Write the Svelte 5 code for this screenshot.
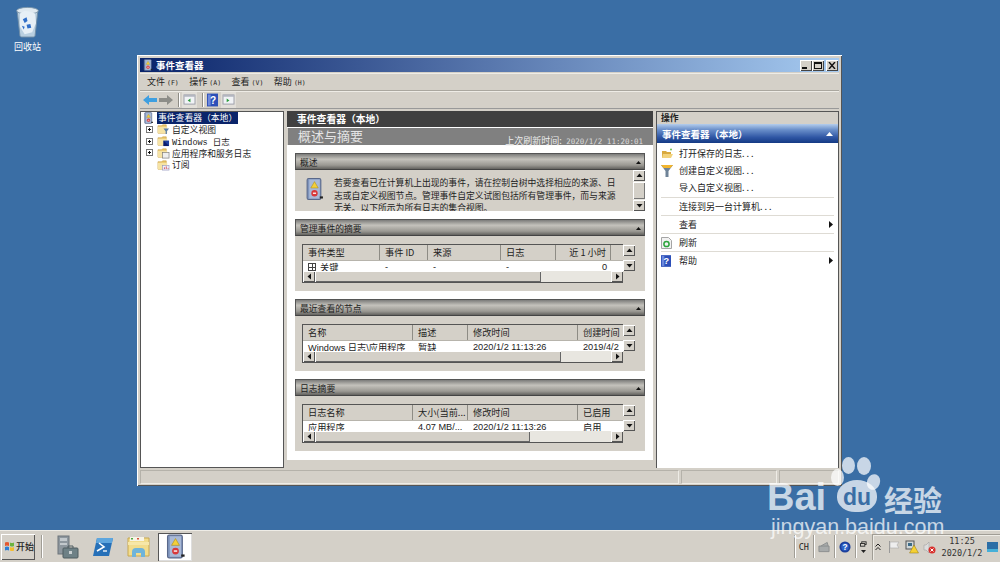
<script lang="ts">
	const tree = [
		{ label: '自定义视图', kind: 'filter', plus: true },
		{ label: 'Windows 日志', kind: 'win', plus: true },
		{ label: '应用程序和服务日志', kind: 'app', plus: true },
		{ label: '订阅', kind: 'sub', plus: false }
	];

	const tables = [
		{
			title: '管理事件的摘要',
			cols: [
				{ w: 77, text: '事件类型', row: '关键', expand: true },
				{ w: 48, text: '事件 ID', row: '-' },
				{ w: 73, text: '来源', row: '-' },
				{ w: 55, text: '日志', row: '-' },
				{ w: 55, text: '近 1 小时', row: '0', right: true },
				{ w: 12, text: '', row: '' }
			],
			thumb: 226
		},
		{
			title: '最近查看的节点',
			cols: [
				{ w: 110, text: '名称', row: 'Windows 日志\\应用程序' },
				{ w: 55, text: '描述', row: '暂缺' },
				{ w: 110, text: '修改时间', row: '2020/1/2 11:13:26' },
				{ w: 45, text: '创建时间', row: '2019/4/2' }
			],
			thumb: 246
		},
		{
			title: '日志摘要',
			cols: [
				{ w: 110, text: '日志名称', row: '应用程序' },
				{ w: 55, text: '大小(当前...', row: '4.07 MB/...' },
				{ w: 110, text: '修改时间', row: '2020/1/2 11:13:26' },
				{ w: 45, text: '已启用', row: '启用' }
			],
			thumb: 215
		}
	];

	const actions = [
		{ label: '打开保存的日志. . .', icon: 'open' },
		{ label: '创建自定义视图. . .', icon: 'funnel' },
		{ label: '导入自定义视图. . .', sep: true },
		{ label: '连接到另一台计算机. . .', sep: true },
		{ label: '查看', arrow: true, sep: true },
		{ label: '刷新', icon: 'refresh', sep: true },
		{ label: '帮助', icon: 'help', arrow: true }
	];
</script>

{#snippet logIcon(w, h)}
	<svg width={w} height={h} viewBox="0 0 18 22">
		<rect x="2" y="1" width="13" height="20" rx="1.5" fill="#7f95bd" stroke="#59688a" />
		<rect x="4" y="2" width="10" height="18" fill="#a9b9d6" />
		<path d="M9 4l3.500 6h-7z" fill="#f3cf3a" stroke="#a98a12" stroke-width=".5" />
		<circle cx="9" cy="15" r="3" fill="#d8383a" />
		<rect x="7.500" y="14.400" width="3" height="1.200" fill="#fff" />
		<path d="M14 18h3v2h-3z" fill="#222" />
	</svg>
{/snippet}

{#snippet folder(kind)}
	<svg width="13" height="12" viewBox="0 0 14 13">
		<path d="M1 3h4l1-1h4v9H1z" fill="#e8c468" stroke="#c69b3c" stroke-width=".6" />
		<rect x="1" y="4" width="10" height="7" fill="#f6e3a4" />
		{#if kind === 'filter'}
			<path d="M7 6h6l-2.300 3v3H9.300V9z" fill="#5c7fa8" />
		{:else if kind === 'win'}
			<rect x="7" y="6" width="6" height="6" fill="#1d3f9e" />
			<path d="M7 6l6 6H7z" fill="#0b1c6e" />
		{:else if kind === 'app'}
			<rect x="6" y="6" width="7" height="6" fill="#eee" stroke="#777" stroke-width=".7" />
		{:else}
			<rect x="6" y="7" width="7" height="5" fill="#eef" stroke="#8a8fb8" stroke-width=".6" />
			<path d="M8 11V9M10 11V8M12 11v-1" stroke="#c33" stroke-width=".8" />
		{/if}
	</svg>
{/snippet}

{#snippet scrollBtn(dir)}
	<span class="sbtn">
		<svg width="7" height="7" viewBox="0 0 7 7">
			{#if dir === 'up'}<path d="M3.500 1.500L6.500 5h-6z" />
			{:else if dir === 'down'}<path d="M3.500 5.500L.5 2h6z" />
			{:else if dir === 'left'}<path d="M1.500 3.500L5 .5v6z" />
			{:else}<path d="M5.500 3.500L2 .5v6z" />{/if}
		</svg>
	</span>
{/snippet}

{#snippet sectionHead(title)}
	<div class="sec-head">
		<span>{title}</span>
		<svg width="5" height="3" viewBox="0 0 5 3"><path d="M2.500 0L5 3H0z" fill="#111" /></svg>
	</div>
{/snippet}

<div class="desktop">
	<div class="wallpaper">
		<div class="recycle">
			<svg width="27" height="32" viewBox="0 0 28 34">
				<path d="M3 5h22l-3 27a2 2 0 0 1-2 1H8a2 2 0 0 1-2-1z" fill="#b9cfe0" stroke="#6f8da6" />
				<ellipse cx="14" cy="5" rx="11.500" ry="3.500" fill="#dfe9f0" stroke="#7e98ac" />
				<path d="M6 8l5-3 6 1 5 2 1 10-4 10-8 2-5-8z" fill="#e6eff6" />
				<path d="M9 14l4-2 1 4-3 2zM13 20l4-1 1 4-4 1zM8 21l3 1-1 3z" fill="#2f6ec8" />
			</svg>
			<span>回收站</span>
		</div>

		<div class="window">
			<div class="titlebar">
				{@render logIcon(10, 12)}
				<span class="title">事件查看器</span>
				<div class="win-btns">
					<span class="wbtn"><i class="min"></i></span>
					<span class="wbtn"><i class="max"></i></span>
					<span class="wbtn close">
						<svg width="8" height="7" viewBox="0 0 8 7"><path d="M1 0l6 7M7 0L1 7" stroke="#111" stroke-width="1.400" /></svg>
					</span>
				</div>
			</div>

			<div class="menubar">
				<span>文件 <em>(F)</em></span>
				<span>操作 <em>(A)</em></span>
				<span>查看 <em>(V)</em></span>
				<span>帮助 <em>(H)</em></span>
			</div>

			<div class="toolbar">
				<svg width="14" height="12" viewBox="0 0 14 12"><path d="M0 6l6-5v3h8v4H6v3z" fill="#3f9fe0" /></svg>
				<svg class="fwd" width="14" height="12" viewBox="0 0 14 12"><path d="M14 6L8 1v3H0v4h8v3z" fill="#8d8d88" /></svg>
				<i class="tsep"></i>
				<span class="tool">
					<svg width="13" height="11" viewBox="0 0 14 12">
						<rect x="1" y="1" width="12" height="10" fill="#f1f3f6" stroke="#9a9ca6" />
						<rect x="1" y="1" width="12" height="2" fill="#b3b6c0" />
						<path d="M8 5L5 7l3 2z" fill="#2c9c3c" />
					</svg>
				</span>
				<i class="tsep"></i>
				<span class="tool help">
					<svg width="11" height="14" viewBox="0 0 12 14"><rect width="12" height="14" fill="#2c4fb8" /><rect x="1" y="1" width="3" height="12" fill="#6c88dc" /><text x="6.500" y="11" class="q">?</text></svg>
				</span>
				<span class="tool">
					<svg width="13" height="11" viewBox="0 0 14 12">
						<rect x="1" y="1" width="12" height="10" fill="#f1f3f6" stroke="#9a9ca6" />
						<rect x="1" y="1" width="12" height="2" fill="#b3b6c0" />
						<path d="M5 5l3 2-3 2z" fill="#2c9c3c" />
					</svg>
				</span>
			</div>

			<div class="panes">
				<div class="tree">
					<div class="tree-row root">
						{@render logIcon(11, 12)}
						<span class="selected">事件查看器（本地）</span>
					</div>
					{#each tree as item}
						<div class="tree-row">
							{#if item.plus}<span class="plus"></span>{:else}<span class="noplus"></span>{/if}
							{@render folder(item.kind)}
							<span class:mono={item.kind === 'win'}>{item.label}</span>
						</div>
					{/each}
				</div>

				<div class="center">
					<div class="c-head">事件查看器（本地）</div>
					<div class="c-band">
						<span class="c-title">概述与摘要</span>
						<span class="c-time"><b>上次刷新时间:</b> 2020/1/2 11:20:01</span>
					</div>
					<div class="c-body">
						<section>
							{@render sectionHead('概述')}
							<div class="overview">
								{@render logIcon(19, 24)}
								<p>若要查看已在计算机上出现的事件，请在控制台树中选择相应的来源、日志或自定义视图节点。管理事件自定义试图包括所有管理事件，而与来源无关。以下所示为所有日志的集合视图。</p>
								<div class="vbar">
									{@render scrollBtn('up')}
									<span class="vthumb"></span>
									{@render scrollBtn('down')}
								</div>
							</div>
						</section>

						{#each tables as t}
							<section>
								{@render sectionHead(t.title)}
								<div class="sec-body">
									<div class="tbl">
										<div class="tbl-main">
											<div class="tbl-head">
												{#each t.cols as c}
													<span style="width:{c.w}px" class:right={c.right}>{c.text}</span>
												{/each}
											</div>
											<div class="tbl-row">
												{#each t.cols as c}
													<span style="width:{c.w}px" class:right={c.right}>
														{#if c.expand}<i class="expand"></i>{/if}{c.row}
													</span>
												{/each}
											</div>
											<div class="hbar">
												{@render scrollBtn('left')}
												<span class="hthumb" style="width:{t.thumb}px"></span>
												<span class="htrack"></span>
												{@render scrollBtn('right')}
											</div>
										</div>
										<div class="tbl-v">
											{@render scrollBtn('up')}
											{@render scrollBtn('down')}
										</div>
									</div>
								</div>
							</section>
						{/each}
					</div>
					<div class="c-foot"></div>
				</div>

				<div class="actions">
					<div class="a-head">操作</div>
					<div class="a-blue">
						<span>事件查看器（本地）</span>
						<svg width="7" height="4" viewBox="0 0 7 4"><path d="M3.500 0L7 4H0z" fill="#fff" /></svg>
					</div>
					<div class="a-list">
						{#each actions as a}
							<div class="a-item">
								<span class="a-ico">
									{#if a.icon === 'open'}
										<svg width="12" height="11" viewBox="0 0 12 11">
											<path d="M1 3h4l1 1h4v6H1z" fill="#d9a93e" />
											<path d="M2 6h10l-2 4H1z" fill="#f2d27c" />
											<circle cx="10" cy="1.500" r="1" fill="#6bbf4e" />
										</svg>
									{:else if a.icon === 'funnel'}
										<svg width="12" height="12" viewBox="0 0 12 12">
											<path d="M0 0h12L7.500 6v6h-3V6z" fill="#6f8398" />
											<path d="M0 0h12L9.500 3h-7z" fill="#f2b52e" />
										</svg>
									{:else if a.icon === 'refresh'}
										<svg width="11" height="12" viewBox="0 0 11 12">
											<path d="M.5.5h7l3 3v8H.5z" fill="#f2f2f2" stroke="#a5a5a5" />
											<circle cx="5.500" cy="7" r="2.600" fill="none" stroke="#2ca43c" stroke-width="1.500" />
										</svg>
									{:else if a.icon === 'help'}
										<svg width="10" height="12" viewBox="0 0 12 14"><rect width="12" height="14" fill="#2c4fb8" /><rect x="1" y="1" width="3" height="12" fill="#6c88dc" /><text x="6.500" y="11" class="q">?</text></svg>
									{/if}
								</span>
								<span class="a-text">{a.label}</span>
								{#if a.arrow}
									<svg class="a-arrow" width="4" height="7" viewBox="0 0 4 7"><path d="M0 0l4 3.500L0 7z" fill="#111" /></svg>
								{/if}
							</div>
							{#if a.sep}<i class="a-sep"></i>{/if}
						{/each}
					</div>
				</div>
			</div>

			<div class="status">
				<span class="st-main"></span>
				<span class="st-a"></span>
				<span class="st-b"></span>
			</div>
		</div>
	</div>

	<div class="taskbar">
		<div class="start">
			<svg width="11" height="11" viewBox="0 0 11 11">
				<path d="M1 1.500q2-1 4 0v3.500q-2-1-4 0z" fill="#e4572e" />
				<path d="M6 1.500q2 1 4 0v3.500q-2 1-4 0z" fill="#6cb33f" />
				<path d="M1 6q2-1 4 0v3.500q-2-1-4 0z" fill="#2f7fd6" />
				<path d="M6 6q2 1 4 0v3.500q-2 1-4 0z" fill="#f4bd2f" />
			</svg>
			<span>开始</span>
		</div>
		<i class="tb-sep"></i>
		<div class="tb-icons">
			<span class="tb-ico">
				<svg width="24" height="24" viewBox="0 0 24 24">
					<rect x="3" y="1" width="11" height="18" fill="#8e979e" stroke="#6c747b" />
					<rect x="5" y="3" width="7" height="3" fill="#c2c8cc" />
					<rect x="5" y="8" width="7" height="2" fill="#c2c8cc" />
					<rect x="8" y="13" width="15" height="10" rx="1" fill="#6e8186" stroke="#4e5d60" />
					<path d="M13 13v-2h5v2" fill="none" stroke="#4e5d60" />
					<rect x="14" y="16" width="3" height="3" fill="#c9d0d2" />
				</svg>
			</span>
			<span class="tb-ico">
				<svg width="22" height="20" viewBox="0 0 22 20">
					<path d="M5 1h16l-4 18H1z" fill="#2670b8" />
					<path d="M5 1h16l-1 5H4z" fill="#5ea6de" />
					<path d="M7 6l5 4-7 4" fill="none" stroke="#fff" stroke-width="1.600" />
					<path d="M11 14h4" stroke="#fff" stroke-width="1.300" />
				</svg>
			</span>
			<span class="tb-ico">
				<svg width="24" height="22" viewBox="0 0 24 22">
					<path d="M1 2h21v18H1z" fill="#f2dc8c" stroke="#c8a850" />
					<rect x="3" y="1" width="14" height="4" fill="#f7f4e6" />
					<rect x="4" y="2" width="2" height="1.500" fill="#4eaa3e" />
					<rect x="10" y="2" width="2" height="1.500" fill="#d8503a" />
					<path d="M1 6h21v3H1z" fill="#f7e7a8" />
					<path d="M5 21v-5q0-4 4-4h5q4 0 4 4v5h-4v-4H9v4z" fill="#6fb4da" />
				</svg>
			</span>
			<span class="tb-ico active">{@render logIcon(21, 25)}</span>
		</div>

		<div class="tray-left">
			<i class="tb-sep"></i>
			<span class="ch">CH</span>
			<i class="tb-sep"></i>
			<svg width="12" height="12" viewBox="0 0 13 12"><path d="M1 5h11v6H1zM3 5l7-4 1 4" fill="#a8abab" stroke="#8a8d8d" /></svg>
			<i class="tb-sep"></i>
			<svg width="12" height="12" viewBox="0 0 13 13"><circle cx="6.500" cy="6.500" r="6" fill="#1b3f9c" /><circle cx="6.500" cy="6.500" r="4" fill="#2d63c8" /><text x="6.500" y="9.500" class="q small">?</text></svg>
			<i class="tb-sep"></i>
			<span class="mini">
				<svg width="7" height="6" viewBox="0 0 8 6"><rect x="2" y=".5" width="5" height="3" fill="none" stroke="#222" /><rect x=".5" y="2.500" width="5" height="3" fill="#d4d0c8" stroke="#222" /></svg>
				<svg width="5" height="3" viewBox="0 0 5 3"><path d="M0 0h5L2.500 3z" fill="#222" /></svg>
			</span>
		</div>

		<div class="tray">
			<svg width="6" height="8" viewBox="0 0 6 8"><path d="M.5 3.500L3 1l2.500 2.500M.5 7L3 4.500 5.500 7" fill="none" stroke="#222" /></svg>
			<svg class="flag" width="12" height="12" viewBox="0 0 12 12"><path d="M1.500 0v12" stroke="#999" /><path d="M2 1h9l-2 3 2 3H2z" fill="#eee" stroke="#aaa" stroke-width=".6" /></svg>
			<svg width="14" height="14" viewBox="0 0 14 14">
				<rect x="1" y="1" width="8" height="8" fill="#cfd6d8" stroke="#555" />
				<rect x="3" y="3" width="4" height="3" fill="#3c6a86" />
				<path d="M9 5l4.500 8h-9z" fill="#f5d033" stroke="#8e7410" stroke-width=".5" />
			</svg>
			<svg class="sound" width="13" height="13" viewBox="0 0 13 13">
				<path d="M1 4h2l3-3v11L3 9H1z" fill="#ddd" stroke="#999" stroke-width=".5" />
				<circle cx="9" cy="9" r="3.500" fill="#d8302c" />
				<path d="M7.500 7.500l3 3M10.500 7.500l-3 3" stroke="#fff" />
			</svg>
			<div class="clock">
				<span>11:25</span>
				<span>2020/1/2</span>
			</div>
			<svg class="show-desk" width="11" height="10" viewBox="0 0 11 10"><rect width="11" height="10" fill="#2c6ea6" /><rect y="7" width="11" height="3" fill="#46b0d8" /></svg>
		</div>
	</div>

	<div class="watermark">
		<span class="toe t1"></span>
		<span class="toe t2"></span>
		<span class="toe t3"></span>
		<span class="toe t4"></span>
		<span class="paw">du</span>
		<span class="bai">Bai</span>
		<span class="jy">经验</span>
		<span class="url">jingyan.baidu.com</span>
	</div>
</div>

<style>
	:global(body) {
		margin: 0;
		overflow: hidden;
	}

	.desktop {
		position: relative;
		display: flex;
		flex-direction: column;
		width: 1000px;
		height: 562px;
		overflow: hidden;
		font-family: 'Noto Sans CJK SC', 'Liberation Sans', sans-serif;
		font-size: 8.800px;
		color: #222;
	}

	.wallpaper {
		position: relative;
		flex: 1;
		background: #3a6ea5;
	}

	.recycle {
		display: flex;
		flex-direction: column;
		align-items: center;
		width: 55px;
		padding-top: 6px;
		color: #fff;
	}

	.recycle span {
		margin-top: 3px;
		font-size: 9px;
		line-height: 12px;
	}

	.window {
		position: absolute;
		left: 137px;
		top: 55px;
		display: flex;
		flex-direction: column;
		box-sizing: border-box;
		width: 705px;
		height: 431px;
		padding: 3px 3px 2px;
		background: #d4d0c8;
		box-shadow: inset 1px 1px 0 #fff, inset -1px -1px 0 #555;
	}

	.titlebar {
		display: flex;
		align-items: center;
		gap: 3px;
		flex: none;
		height: 14px;
		padding: 0 1px 0 3px;
		background: linear-gradient(90deg, #0a246a, #a6caf0);
		color: #fff;
		font-weight: 700;
	}

	.title {
		font-size: 9.500px;
	}

	.win-btns {
		display: flex;
		margin-left: auto;
	}

	.wbtn {
		display: flex;
		align-items: center;
		justify-content: center;
		box-sizing: border-box;
		width: 12px;
		height: 11px;
		background: #d4d0c8;
		box-shadow: inset 1px 1px 0 #fff, inset -1px -1px 0 #444;
	}

	.wbtn.close {
		margin-left: 2px;
	}

	.min {
		display: block;
		width: 5px;
		height: 2px;
		margin: 5px 3px 0 0;
		background: #111;
	}

	.max {
		display: block;
		box-sizing: border-box;
		width: 8px;
		height: 7px;
		border: 1px solid #111;
		border-top-width: 2px;
	}

	.menubar {
		display: flex;
		align-items: center;
		flex: none;
		gap: 10.500px;
		height: 17px;
		margin-top: 1px;
		padding-left: 7px;
		border-bottom: 1px solid #aaa79f;
		box-shadow: inset 0 1px 0 #eeece6;
		font-size: 9px;
	}

	.menubar em {
		font-family: 'DejaVu Sans Mono', monospace;
		font-size: 6.500px;
		font-style: normal;
	}

	.toolbar {
		display: flex;
		align-items: center;
		flex: none;
		gap: 1px;
		height: 17px;
		padding-left: 3px;
		border-bottom: 1px solid #999;
		box-shadow: inset 0 1px 0 #eeece6;
	}

	.fwd {
		margin-left: 1px;
	}

	.tsep {
		display: block;
		width: 1px;
		height: 14px;
		margin: 0 2px 0 4px;
		background: #8e8c85;
		box-shadow: 1px 0 0 #fff;
	}

	.tool {
		display: flex;
		align-items: center;
		justify-content: center;
		width: 15px;
		height: 16px;
		background: #e2dfd9;
	}

	.tool.help {
		width: 12px;
		margin-right: 2px;
		background: none;
	}

	.q {
		font-family: 'Liberation Sans', sans-serif;
		font-size: 11px;
		font-weight: 700;
		fill: #fff;
		text-anchor: middle;
	}

	.q.small {
		font-size: 9px;
	}

	.panes {
		display: flex;
		flex: 1;
		min-height: 0;
		gap: 3px;
		padding-top: 2px;
	}

	.tree {
		flex: none;
		box-sizing: border-box;
		width: 144px;
		padding: 0 0 0 1px;
		background: #fff;
		border: 1px solid #555;
	}

	.tree-row {
		display: flex;
		align-items: center;
		gap: 2px;
		height: 11.800px;
		padding-left: 4px;
		white-space: nowrap;
	}

	.tree-row.root {
		gap: 3px;
		box-sizing: border-box;
		height: 11.500px;
		padding-left: 1px;
	}

	.mono {
		font-family: 'Liberation Mono', 'Noto Sans CJK SC', monospace;
		font-size: 8.500px;
	}

	.selected {
		padding: 0 1px;
		background: #0a246a;
		color: #fff;
		line-height: 12px;
	}

	.plus {
		box-sizing: border-box;
		flex: none;
		width: 7px;
		height: 7px;
		margin-right: 2px;
		border: 1px solid #777;
		background: linear-gradient(#111, #111) center / 3px 1px no-repeat, linear-gradient(#111, #111) center / 1px 3px no-repeat;
	}

	.noplus {
		width: 7px;
		margin-right: 2px;
	}

	.center {
		display: flex;
		flex-direction: column;
		flex: none;
		width: 366px;
		background: #fff;
	}

	.c-head {
		flex: none;
		height: 16px;
		padding-left: 10px;
		background: #404040;
		color: #fff;
		font-size: 9.800px;
		font-weight: 700;
		line-height: 16px;
	}

	.c-band {
		display: flex;
		align-items: flex-end;
		justify-content: space-between;
		flex: none;
		height: 17px;
		margin-top: 1px;
		padding: 0 10px 0 10px;
		background: #808080;
		color: #e4e4e4;
		border-left: 1px solid #d4d0c8;
	}

	.c-title {
		margin-bottom: 1px;
		font-size: 13px;
		line-height: 16px;
	}

	.c-time {
		position: relative;
		z-index: 1;
		margin-bottom: -2px;
		font-family: 'DejaVu Sans Mono', monospace;
		font-size: 7.500px;
		color: #dcdcdc;
		line-height: 10px;
	}

	.c-time b {
		font-family: 'Noto Sans CJK SC', sans-serif;
		font-size: 9px;
		font-weight: 400;
		color: #eee;
		text-shadow: 0 0 1px #777;
	}

	.c-body {
		display: flex;
		flex-direction: column;
		flex: 1;
		gap: 8px;
		box-sizing: border-box;
		min-height: 0;
		padding: 8px 8px 0;
	}

	.sec-head {
		display: flex;
		align-items: center;
		justify-content: space-between;
		box-sizing: border-box;
		height: 17px;
		padding: 2px 3px 0 4px;
		background: linear-gradient(#7c7c7a, #c4c2bc 35%, #9a9892 75%, #63625f);
		border: 1px solid #555;
		border-bottom-color: #444;
	}

	.overview {
		position: relative;
		display: flex;
		box-sizing: border-box;
		height: 41px;
		padding: 7px 0 0 10px;
		overflow: hidden;
		background: #d4d0c8;
	}

	.overview p {
		width: 284px;
		margin: 0 0 0 10px;
		font-size: 8.800px;
		line-height: 12.500px;
	}

	.vbar {
		position: absolute;
		top: 0;
		right: 0;
		display: flex;
		flex-direction: column;
		width: 12px;
		height: 41px;
		background: #e8e6e0;
	}

	.vthumb {
		flex: 1;
		margin: 1px 0;
		background: #d4d0c8;
		box-shadow: inset 1px 1px 0 #fff, inset -1px -1px 0 #777;
	}

	.sbtn {
		display: flex;
		align-items: center;
		justify-content: center;
		flex: none;
		box-sizing: border-box;
		width: 12px;
		height: 11px;
		background: #d4d0c8;
		box-shadow: inset 1px 1px 0 #fff, inset -1px -1px 0 #555;
	}

	.sbtn path {
		fill: #111;
	}

	.sec-body {
		box-sizing: border-box;
		height: 55px;
		padding: 8px 7px 0;
		background: #d4d0c8;
	}

	.tbl {
		display: flex;
		height: 39px;
	}

	.tbl-main {
		display: flex;
		flex-direction: column;
		flex: none;
		box-sizing: border-box;
		width: 321px;
		overflow: hidden;
		border: 1px solid #555;
		border-right: 0;
	}

	.tbl-head,
	.tbl-row {
		display: flex;
		flex: none;
		overflow: hidden;
		white-space: nowrap;
	}

	.tbl-head {
		box-sizing: border-box;
		height: 16px;
		background: #d4d0c8;
		border-bottom: 1px solid #b7b4ac;
		font-size: 9.200px;
		line-height: 15px;
	}

	.tbl-head span {
		box-sizing: border-box;
		flex: none;
		padding: 0 4px 0 5px;
		overflow: hidden;
		border-right: 1px solid #8e8c85;
	}

	.tbl-head span:last-child {
		border-right: 0;
	}

	.tbl-row {
		height: 10px;
		background: #fff;
		font-size: 9.200px;
	}

	.tbl-row span {
		display: flex;
		align-items: center;
		box-sizing: border-box;
		flex: none;
		height: 12px;
		padding: 0 4px 0 5px;
		overflow: hidden;
		font-family: 'Liberation Sans', 'Noto Sans CJK SC', sans-serif;
	}

	span.right {
		justify-content: flex-end;
		text-align: right;
	}

	.expand {
		flex: none;
		box-sizing: border-box;
		width: 8px;
		height: 8px;
		margin-right: 4px;
		border: 1px solid #444;
		background: linear-gradient(#444, #444) center / 6px 1px no-repeat, linear-gradient(#444, #444) center / 1px 6px no-repeat;
	}

	.hbar {
		position: relative;
		display: flex;
		flex: none;
		height: 11px;
		background: #e8e6e0;
	}

	.hthumb {
		flex: none;
		background: #d4d0c8;
		box-shadow: inset 1px 1px 0 #fff, inset -1px -1px 0 #666;
	}

	.htrack {
		flex: 1;
	}

	.tbl-v {
		display: flex;
		flex-direction: column;
		flex: none;
		gap: 4px;
		width: 12px;
		padding-top: 1px;
	}

	.c-foot {
		flex: none;
		height: 8px;
		background: #d4d0c8;
	}

	.actions {
		display: flex;
		flex-direction: column;
		flex: 1;
		min-width: 0;
		background: #fff;
		border: 1px solid #555;
		border-bottom: 0;
	}

	.a-head {
		flex: none;
		height: 12px;
		padding-left: 4px;
		background: #d4d0c8;
		font-weight: 700;
		line-height: 12px;
	}

	.a-blue {
		display: flex;
		align-items: center;
		justify-content: space-between;
		flex: none;
		height: 19px;
		padding: 0 5px;
		background: linear-gradient(#b4cdec, #6a8fca 30%, #2f56a4 70%, #143a84);
		color: #fff;
		font-size: 9.500px;
		font-weight: 700;
	}

	.a-list {
		padding: 2px 4px 0;
	}

	.a-item {
		display: flex;
		align-items: center;
		height: 17.200px;
	}

	.a-ico {
		display: flex;
		align-items: center;
		flex: none;
		width: 18px;
	}

	.a-text {
		flex: 1;
		font-size: 9px;
	}

	.a-arrow {
		margin-right: 1px;
	}

	.a-sep {
		display: block;
		height: 1px;
		background: #dedbd4;
	}

	.status {
		display: flex;
		flex: none;
		gap: 2px;
		height: 14px;
		margin-top: 2px;
	}

	.status span {
		box-sizing: border-box;
		border: 1px solid #b5b2aa;
		border-right-color: #eeece6;
		border-bottom-color: #eeece6;
	}

	.st-main {
		flex: 1;
	}

	.st-a {
		width: 96px;
	}

	.st-b {
		width: 60px;
	}

	.taskbar {
		display: flex;
		align-items: center;
		flex: none;
		box-sizing: border-box;
		height: 32px;
		background: #d4d0c8;
		border-top: 1px solid #eeece6;
	}

	.start {
		display: flex;
		align-items: center;
		gap: 1px;
		flex: none;
		box-sizing: border-box;
		width: 34px;
		height: 26px;
		margin-left: 1px;
		padding-left: 3px;
		box-shadow: inset 1px 1px 0 #fff, inset -1px -1px 0 #555;
		font-size: 9px;
		font-weight: 500;
		white-space: nowrap;
	}

	.tb-sep {
		display: block;
		flex: none;
		width: 1px;
		height: 23px;
		background: #a09d95;
		box-shadow: 1px 0 0 #fff;
	}

	.taskbar > .tb-sep {
		margin-left: 6px;
	}

	.tb-icons {
		display: flex;
		align-items: center;
		gap: 2px;
		margin-left: 8px;
	}

	.tb-ico {
		display: flex;
		align-items: center;
		justify-content: center;
		width: 34px;
		height: 28px;
	}

	.tb-ico.active {
		background: #fff;
		box-shadow: inset 1px 1px 0 #555, inset -1px -1px 0 #ddd;
	}

	.tray-left {
		display: flex;
		align-items: center;
		gap: 4px;
		margin-left: auto;
	}

	.ch {
		font-family: 'DejaVu Sans Mono', monospace;
		font-size: 8.500px;
	}

	.mini {
		display: flex;
		flex-direction: column;
		align-items: center;
		gap: 3px;
	}

	.tray {
		display: flex;
		align-items: center;
		gap: 5px;
		flex: none;
		box-sizing: border-box;
		width: 128px;
		height: 26px;
		margin-left: 5px;
		padding-left: 2px;
		border-top: 1px solid #a09d95;
		border-left: 1px solid #a09d95;
		box-shadow: inset 1px 1px 0 #eeece6;
	}

	.flag {
		margin-left: 2px;
	}

	.sound {
		margin-left: -1px;
	}

	.clock {
		display: flex;
		flex-direction: column;
		align-items: center;
		width: 36px;
		margin-left: 3px;
		font-family: 'DejaVu Sans Mono', 'Liberation Mono', monospace;
		font-size: 8.500px;
		line-height: 12px;
		color: #333;
	}

	.show-desk {
		margin-left: 2px;
	}

	.watermark {
		position: absolute;
		left: 0;
		top: 0;
		width: 1000px;
		height: 562px;
		color: rgba(255, 255, 255, 0.72);
		font-family: 'Liberation Sans', sans-serif;
		pointer-events: none;
	}

	.toe {
		position: absolute;
		border-radius: 50%;
		background: rgba(255, 255, 255, 0.72);
	}

	.t1 {
		left: 831px;
		top: 469px;
		width: 13px;
		height: 17px;
	}

	.t2 {
		left: 842px;
		top: 457px;
		width: 13px;
		height: 17px;
	}

	.t3 {
		left: 857px;
		top: 457px;
		width: 14px;
		height: 18px;
	}

	.t4 {
		left: 867px;
		top: 474px;
		width: 13px;
		height: 16px;
		transform: rotate(20deg);
	}

	.paw {
		position: absolute;
		left: 837px;
		top: 480px;
		width: 40px;
		height: 32px;
		background: rgba(255, 255, 255, 0.72);
		border-radius: 50% 50% 45% 45%;
		color: #3a6ea5;
		font-size: 23px;
		font-weight: 700;
		line-height: 35px;
		text-align: center;
	}

	.bai {
		position: absolute;
		left: 767px;
		top: 477px;
		font-size: 38px;
		font-weight: 700;
		line-height: 40px;
	}

	.jy {
		position: absolute;
		left: 884px;
		top: 481px;
		font-family: 'Noto Sans CJK SC', sans-serif;
		font-size: 29px;
		font-weight: 700;
		line-height: 36px;
	}

	.url {
		position: absolute;
		left: 771px;
		top: 514px;
		font-size: 21.500px;
		line-height: 26px;
	}
</style>
